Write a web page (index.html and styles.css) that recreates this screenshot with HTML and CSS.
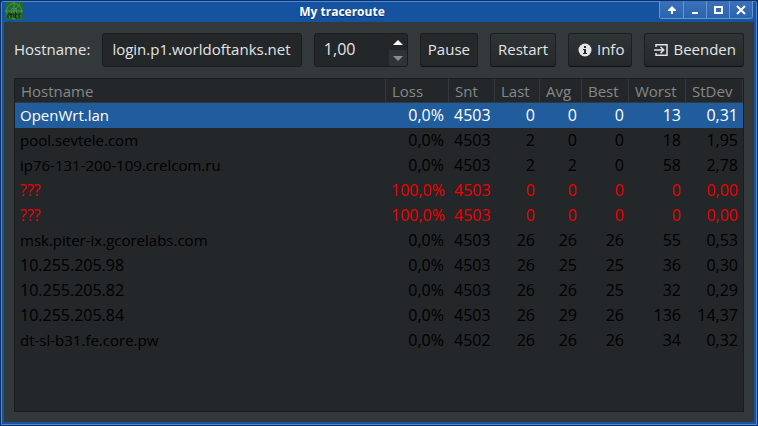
FILE: index.html
```html
<!DOCTYPE html>
<html lang="de">
<head>
    <meta charset="UTF-8">
    <meta name="viewport" content="width=device-width, initial-scale=1.0">
    <title>My traceroute</title>
    <link rel="stylesheet" href="styles.css">
</head>
<body>
    <div class="window">
        <header class="titlebar">
            <svg class="app-icon" viewBox="0 0 18 18" aria-hidden="true">
                <rect width="18" height="18" fill="#24692f"/>
                <g fill="none" stroke="#4c9a55" stroke-width="0.800">
                    <circle cx="9" cy="9" r="3"/>
                    <circle cx="9" cy="9" r="7.500"/>
                    <path d="M9 0v18M0 9h18M9 9l6-7"/>
                </g>
                <path d="M3 16v-4h3v4M6 12h3v4M10.500 10v6h2M9.500 12h3M14 16v-4h2.500" fill="none" stroke="#0c2410"/>
            </svg>
            <h1>My traceroute</h1>
            <div class="window-buttons">
                <button type="button" aria-label="Einrollen">
                    <svg viewBox="0 0 10 10"><path d="M5 1L9 5V6H6V9H4V6H1V5Z" fill="#fff"/></svg>
                </button>
                <button type="button" aria-label="Minimieren">
                    <svg viewBox="0 0 10 10"><path d="M2 7h6v2H2z" fill="#fff"/></svg>
                </button>
                <button type="button" aria-label="Maximieren">
                    <svg viewBox="0 0 10 10"><path d="M1 1h9v8H1zM3 3v4h5V3z" fill="#fff" fill-rule="evenodd"/></svg>
                </button>
                <button type="button" aria-label="Schließen">
                    <svg viewBox="0 0 10 10"><path d="M1 1l8 8M9 1l-8 8" stroke="#fff" stroke-width="2"/></svg>
                </button>
            </div>
        </header>

        <main>
            <form class="toolbar">
                <label for="hostname">Hostname:</label>
                <input type="text" id="hostname" class="field" value="login.p1.worldoftanks.net">
                <div class="spin">
                    <input type="text" class="field" inputmode="decimal" aria-label="Intervall" value="1,00">
                    <div class="spin-buttons">
                        <button type="button" aria-label="Erhöhen"><svg viewBox="0 0 10 5"><path d="M0 5L5 0L10 5Z" fill="#fff"/></svg></button>
                        <button type="button" class="down" aria-label="Verringern"><svg viewBox="0 0 10 5"><path d="M0 0L5 5L10 0Z" fill="#8b8d8e"/></svg></button>
                    </div>
                </div>
                <button type="button" class="btn pressed">Pause</button>
                <button type="button" class="btn">Restart</button>
                <button type="button" class="btn">
                    <svg viewBox="0 0 14 14" aria-hidden="true">
                        <circle cx="7" cy="7" r="6.500" fill="#e4e4e4"/>
                        <path d="M6 3h2v2H6zM5 6h3v4h1v1H5v-1h1V7H5z" fill="#25292b"/>
                    </svg>
                    Info
                </button>
                <button type="button" class="btn">
                    <svg viewBox="0 0 14 14" aria-hidden="true" fill="none" stroke="#e4e4e4" stroke-width="1.500">
                        <path d="M2 4V1.700h11v10.600H2V10M0 7h9M6.500 3.800L9.700 7l-3.200 3.200"/>
                    </svg>
                    Beenden
                </button>
            </form>

            <div class="list">
                <table>
                    <colgroup>
                        <col>
                        <col class="loss">
                        <col class="snt">
                        <col class="last">
                        <col class="avg">
                        <col class="best">
                        <col class="worst">
                        <col class="stdev">
                    </colgroup>
                    <thead>
                        <tr><th>Hostname</th><th>Loss</th><th>Snt</th><th>Last</th><th>Avg</th><th>Best</th><th>Worst</th><th>StDev</th></tr>
                    </thead>
                    <tbody>
                        <tr class="selected"><td class="name">OpenWrt.lan</td><td>0,0%</td><td>4503</td><td>0</td><td>0</td><td>0</td><td>13</td><td>0,31</td></tr>
                        <tr><td class="name">pool.sevtele.com</td><td>0,0%</td><td>4503</td><td>2</td><td>0</td><td>0</td><td>18</td><td>1,95</td></tr>
                        <tr><td class="name">ip76-131-200-109.crelcom.ru</td><td>0,0%</td><td>4503</td><td>2</td><td>2</td><td>0</td><td>58</td><td>2,78</td></tr>
                        <tr class="lost"><td>???</td><td>100,0%</td><td>4503</td><td>0</td><td>0</td><td>0</td><td>0</td><td>0,00</td></tr>
                        <tr class="lost"><td>???</td><td>100,0%</td><td>4503</td><td>0</td><td>0</td><td>0</td><td>0</td><td>0,00</td></tr>
                        <tr><td class="name">msk.piter-ix.gcorelabs.com</td><td>0,0%</td><td>4503</td><td>26</td><td>26</td><td>26</td><td>55</td><td>0,53</td></tr>
                        <tr><td>10.255.205.98</td><td>0,0%</td><td>4503</td><td>26</td><td>25</td><td>25</td><td>36</td><td>0,30</td></tr>
                        <tr><td>10.255.205.82</td><td>0,0%</td><td>4503</td><td>26</td><td>26</td><td>25</td><td>32</td><td>0,29</td></tr>
                        <tr><td>10.255.205.84</td><td>0,0%</td><td>4503</td><td>26</td><td>29</td><td>26</td><td>136</td><td>14,37</td></tr>
                        <tr><td class="name">dt-sl-b31.fe.core.pw</td><td>0,0%</td><td>4502</td><td>26</td><td>26</td><td>26</td><td>34</td><td>0,32</td></tr>
                    </tbody>
                </table>
            </div>
        </main>
    </div>
</body>
</html>
```
FILE: styles.css
```css
* {
    margin: 0;
    padding: 0;
    box-sizing: border-box;
}

body {
    background-color: #0a2c5c;
    font-family: "Open Sans", "Noto Sans", sans-serif;
    font-size: 15px;
    color: #e4e4e4;
}

button,
input {
    font: inherit;
    color: inherit;
    border: none;
    outline: none;
}

svg {
    display: block;
}

/* window frame */
.window {
    display: flex;
    flex-direction: column;
    min-height: 100vh;
    padding: 0 2px 2px;
    background-color: #1552a0;
    border: 1px solid #0a3269;
    box-shadow: inset 0 0 0 1px #4f88cf;
    border-radius: 3px 3px 0 0;
}

.titlebar {
    display: flex;
    height: 21px;
}

.titlebar h1 {
    flex: 1;
    font-size: 12px;
    line-height: 22px;
    text-align: center;
    color: #fff;
    text-shadow: 0 1px 1px #0a3269;
}

.app-icon {
    width: 18px;
    height: 18px;
    margin: 1px 2px;
}

.window-buttons {
    display: flex;
    height: 18px;
    margin-right: 2px;
    border: 1px solid #6595d2;
    border-top: none;
    border-radius: 0 0 3px 3px;
    overflow: hidden;
}

.window-buttons button {
    display: flex;
    align-items: center;
    justify-content: center;
    width: 23px;
    background: linear-gradient(#3b71b8, #2a63ae);
}

.window-buttons button + button {
    border-left: 1px solid #6595d2;
}

.window-buttons svg {
    width: 10px;
    height: 10px;
}

main {
    display: flex;
    flex: 1;
    flex-direction: column;
    gap: 11px;
    padding: 11px 10px 10px;
    margin: 0 1px 1px;
    background-color: #33393b;
}

/* toolbar */
.toolbar {
    display: flex;
    gap: 12px;
    height: 34px;
}

.toolbar label {
    line-height: 32px;
}

.field {
    min-width: 0;
    padding: 0 9px 2px;
    background-color: #232729;
    border: 1px solid #1a1d1f;
    border-radius: 3px;
}

#hostname {
    flex: 1;
}

.spin {
    display: flex;
    width: 94px;
    background-color: #232729;
    border: 1px solid #1a1d1f;
    border-radius: 3px;
    overflow: hidden;
}

.spin .field {
    flex: 1;
    font-size: 16px;
    border: none;
}

.spin-buttons {
    display: flex;
    flex-direction: column;
    width: 18px;
}

.spin-buttons button {
    display: flex;
    flex: 1;
    align-items: center;
    justify-content: center;
    background-color: #232729;
}

.spin-buttons .down {
    background-color: #2e3335;
}

.spin-buttons svg {
    width: 10px;
    height: 5px;
}

.btn {
    display: flex;
    align-items: center;
    gap: 5px;
    padding: 0 7px 2px;
    background: linear-gradient(#2f3436, #25292b);
    border: 1px solid #1c1f20;
    border-bottom-color: #0f1112;
    border-radius: 3px;
}

.btn svg {
    width: 14px;
    height: 14px;
    margin: 2px 0 0 2px;
}

.pressed {
    background: #25292b;
}

/* hop list */
.list {
    flex: 1;
    background-color: #232729;
    border: 1px solid #1a1d1f;
}

table {
    width: 100%;
    table-layout: fixed;
    border-collapse: separate;
    border-spacing: 0;
}

.loss { width: 63px; }
.snt { width: 46px; }
.last { width: 45px; }
.avg { width: 42px; }
.best { width: 47px; }
.worst { width: 57px; }
.stdev { width: 57px; }

th {
    height: 24px;
    padding: 0 6px;
    line-height: 22px;
    font-weight: normal;
    text-align: left;
    color: #858788;
    border-right: 1px solid #33393b;
    border-bottom: 1px solid #33393b;
    white-space: nowrap;
}

td {
    height: 25px;
    padding: 0 5px;
    font-size: 16px;
    line-height: 23px;
    text-align: right;
    color: #000;
    white-space: nowrap;
}

td:first-child {
    text-align: left;
}

td.name {
    font-size: 15px;
}

.selected {
    background-color: #215d9c;
}

.selected td {
    color: #fff;
}

.lost td {
    color: #f00000;
}
```
